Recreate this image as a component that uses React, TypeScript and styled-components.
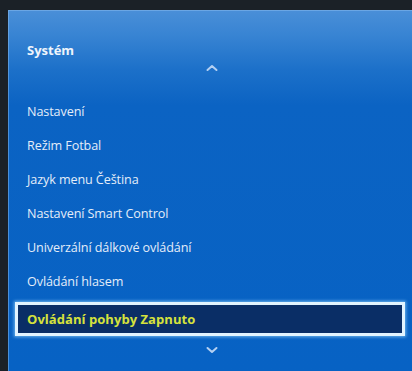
import React from "react";
import styled, { createGlobalStyle } from "styled-components";

const Global = createGlobalStyle`
  html, body { margin: 0; padding: 0; }
  body {
    background: #1b2127;
    width: 412px;
    height: 371px;
    overflow: hidden;
    font-family: "Open Sans", "Noto Sans", sans-serif;
  }
`;

const Screen = styled.div`
  width: 412px;
  height: 371px;
  padding: 10px 0 0 8px;
  box-sizing: border-box;
`;

const Panel = styled.div`
  height: 361px;
  box-sizing: border-box;
  padding: 0 7px;
  display: flex;
  flex-direction: column;
  background: linear-gradient(
    180deg,
    #4a8fd8 0px,
    #3884d3 25px,
    #1c70c9 60px,
    #0b63c3 95px,
    #0762c4 100%
  );
  box-shadow: inset 1px 1px 0 rgba(140, 190, 240, 0.5);
`;

const Title = styled.div`
  padding: 32px 0 0 12px;
  font-size: 13px;
  line-height: 16px;
  font-weight: 700;
  color: #eef4fc;
`;

const ArrowRow = styled.div<{ $h: number }>`
  height: ${(p) => p.$h}px;
  display: flex;
  align-items: center;
  justify-content: center;
  padding-left: 4px;
`;

const List = styled.div`
  margin-top: 16px;
  display: flex;
  flex-direction: column;
`;

const Item = styled.div`
  height: 34px;
  display: flex;
  align-items: center;
  padding-left: 12px;
  font-size: 12.6px;
  color: #e4edf9;
  letter-spacing: -0.1px;
`;

const Selected = styled.div`
  margin-top: 4px;
  height: 34px;
  box-sizing: border-box;
  display: flex;
  align-items: center;
  padding-left: 9px;
  border: 3px solid #e2f4ff;
  box-shadow: 0 0 3px 1px rgba(150, 215, 255, 0.7);
  background: #0a2e66;
  color: #d6e23c;
  font-size: 13px;
  font-weight: 700;
  letter-spacing: 0.05px;
`;

const Chevron = ({ up }: { up?: boolean }) => (
  <svg width="12" height="8" viewBox="0 0 12 8">
    <path
      d={up ? "M1.5 6 L6 2 L10.5 6" : "M1.5 2 L6 6 L10.5 2"}
      fill="none"
      stroke="#b4d0f2"
      strokeWidth="2"
      strokeLinecap="round"
      strokeLinejoin="round"
    />
  </svg>
);

const items = [
  "Nastavení",
  "Režim Fotbal",
  "Jazyk menu Čeština",
  "Nastavení Smart Control",
  "Univerzální dálkové ovládání",
  "Ovládání hlasem",
];

export default function App() {
  return (
    <>
      <Global />
      <Screen>
        <Panel>
          <Title>Systém</Title>
          <ArrowRow $h={20}>
            <Chevron up />
          </ArrowRow>
          <List>
            {items.map((t) => (
              <Item key={t}>{t}</Item>
            ))}
            <Selected>Ovládání pohyby Zapnuto</Selected>
          </List>
          <ArrowRow $h={28}>
            <Chevron />
          </ArrowRow>
        </Panel>
      </Screen>
    </>
  );
}
